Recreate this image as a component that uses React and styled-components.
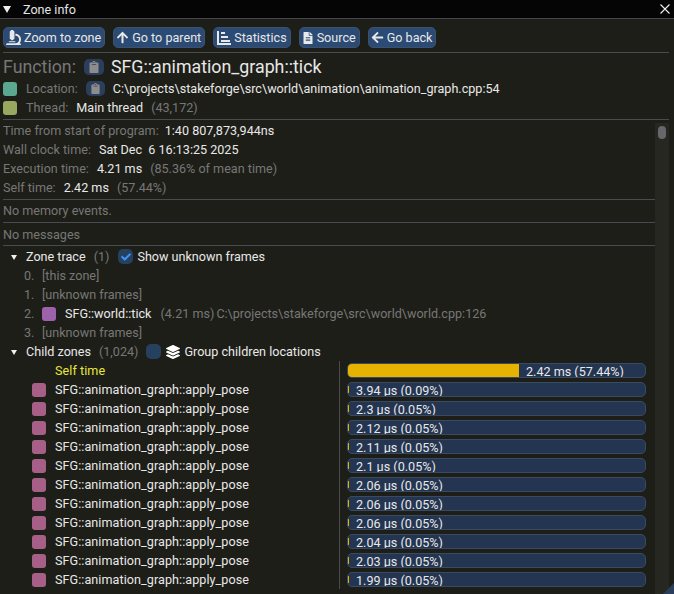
import React from 'react'
import styled, { createGlobalStyle } from 'styled-components'
import { FaFileAlt, FaArrowUp, FaArrowLeft, FaClipboard, FaLayerGroup, FaCheck, FaMicroscope } from 'react-icons/fa'

const Global = createGlobalStyle`
  html, body { margin: 0; padding: 0; background: #1e1e18; }
  body { font-family: Roboto, "Liberation Sans", sans-serif; font-size: 12.6px; color: #fff; }
`

const Window = styled.div`
  position: relative;
  width: 674px;
  height: 594px;
  overflow: hidden;
  background: #1e1e18;
  display: flex;
  flex-direction: column;
`

const TitleBar = styled.div`
  height: 18px;
  flex: none;
  display: flex;
  align-items: center;
  justify-content: space-between;
  padding: 0 2px 0 3px;
  background: #050505;
  border-bottom: 1px solid #45454f;
  color: #e4e4e4;
`

const TitleLeft = styled.div`
  display: flex;
  align-items: center;
  gap: 12px;
`

const Body = styled.div`
  flex: 1;
  min-height: 0;
  padding: 8px 5px 0 3px;
  display: flex;
  flex-direction: column;
`

const Toolbar = styled.div`
  display: flex;
  gap: 8px;
  height: 21px;
`

const Button = styled.div`
  display: flex;
  align-items: center;
  gap: 3px;
  height: 21px;
  box-sizing: border-box;
  padding: 0 3px 0 2px;
  background: #2b4b75;
  border: 1px solid #3a5170;
  border-radius: 5px;
  color: #e8e8e8;
  white-space: nowrap;
`

const Sep = styled.div`
  height: 1px;
  flex: none;
  background: #494950;
  margin: ${p => p.$m || '5px 0 5px'};
`

const FunctionRow = styled.div`
  display: flex;
  align-items: center;
  height: 21px;
  font-size: 17.8px;
  white-space: nowrap;
`

const Row = styled.div`
  display: flex;
  align-items: center;
  height: 19px;
  flex: none;
  white-space: nowrap;
  margin-top: ${p => p.$top || 0}px;
`

const Dim = styled.span`
  color: #777;
  margin-right: ${p => p.$gap ?? 8}px;
  white-space: pre;
`

const Bright = styled.span`
  color: ${p => p.$color || '#e8e8e8'};
  margin-right: ${p => p.$gap ?? 8}px;
  white-space: pre;
`

const Swatch = styled.span`
  display: inline-block;
  flex: none;
  width: 14px;
  height: 14px;
  border-radius: 3px;
  background: ${p => p.$color};
  margin-right: ${p => p.$gap ?? 9}px;
`

const CopyBtn = styled.span`
  display: inline-flex;
  align-items: center;
  justify-content: center;
  flex: none;
  width: ${p => p.$w}px;
  height: ${p => p.$h}px;
  border-radius: 5px;
  background: #2b3f5c;
  color: #8d8d8d;
  margin-right: ${p => p.$gap}px;
`

const Lower = styled.div`
  flex: 1;
  min-height: 0;
  display: flex;
`

const Scrolled = styled.div`
  flex: 1;
  min-width: 0;
  margin-top: 1px;
  overflow: hidden;
`

const ScrollTrack = styled.div`
  width: 14px;
  flex: none;
  margin-top: 3px;
  background: #272722;
  display: flex;
  justify-content: center;
  padding-top: 3px;
`

const ScrollThumb = styled.div`
  width: 8px;
  height: 13px;
  border-radius: 4px;
  background: #66666b;
`

const Arrow = styled.span`
  width: 0;
  height: 0;
  flex: none;
  border-left: ${p => p.$size ?? 3.5}px solid transparent;
  border-right: ${p => p.$size ?? 3.5}px solid transparent;
  border-top: ${p => (p.$size ?? 3.5) * 1.6}px solid #f0f0f0;
  margin: 1px ${p => p.$gap ?? 9}px 0 ${p => p.$left ?? 8}px;
`

const Check = styled.span`
  display: inline-flex;
  align-items: center;
  justify-content: center;
  flex: none;
  width: 15px;
  height: 15px;
  border-radius: 5px;
  background: #26405f;
  color: #4296fa;
  margin-right: ${p => p.$gap ?? 4}px;
`

const Trace = styled.div`
  display: flex;
  align-items: center;
  height: 19px;
  white-space: nowrap;
  padding-left: 21px;
`

const Index = styled.span`
  width: 18px;
  flex: none;
  color: #777;
`

const Children = styled.div`
  display: grid;
  grid-template-columns: 336px 1fr;
`

const NameCol = styled.div`
  display: flex;
  flex-direction: column;
`

const ZoneName = styled.div`
  display: flex;
  align-items: center;
  height: 19px;
  padding-left: 29px;
  white-space: nowrap;
  letter-spacing: 0.06px;
  color: ${p => p.$color || '#e8e8e8'};
`

const ZoneSwatch = styled.span`
  width: 14px;
  height: 14px;
  flex: none;
  border-radius: 3px;
  background: ${p => p.$color || 'transparent'};
  margin-right: 9px;
`

const BarCol = styled.div`
  border-left: 1px solid #494950;
  padding-left: 7px;
  display: flex;
  flex-direction: column;
  gap: 4px;
  margin-right: 9px;
  padding-top: 2px;
`

const Bar = styled.div`
  position: relative;
  height: 15px;
  box-sizing: border-box;
  border: 1px solid #3a4a60;
  border-radius: 5px;
  background: #233550;
  overflow: hidden;
  display: flex;
  align-items: center;
  color: #e8e8e8;
  padding: 2px 0 0 ${p => p.$offset}px;
  white-space: nowrap;
`

const Fill = styled.div`
  position: absolute;
  left: 0;
  top: 0;
  bottom: 0;
  background: #e6b400;
`

const Grip = styled.div`
  position: absolute;
  right: 0;
  bottom: 0;
  width: 0;
  height: 0;
  border-left: 11px solid transparent;
  border-bottom: 11px solid #2b3f5c;
`

const ChartIcon = () => (
  <svg width="15" height="14" viewBox="0 0 15 14" fill="#e8e8e8">
    <rect x="1" y="0" width="2" height="14" />
    <rect x="1" y="12" width="14" height="2" />
    <rect x="5" y="1" width="4" height="2" />
    <rect x="5" y="5" width="7" height="2" />
    <rect x="5" y="9" width="9" height="2" />
  </svg>
)

const CloseIcon = () => (
  <svg width="10" height="10" viewBox="0 0 10 10" stroke="#f0f0f0" strokeWidth="1.1" fill="none" style={{ marginRight: 2 }}>
    <path d="M0.5 0.5L9.5 9.5M9.5 0.5L0.5 9.5" />
  </svg>
)

const rows = ['3.94 µs (0.09%)', '2.3 µs (0.05%)', '2.12 µs (0.05%)', '2.11 µs (0.05%)', '2.1 µs (0.05%)', '2.06 µs (0.05%)', '2.06 µs (0.05%)', '2.06 µs (0.05%)', '2.04 µs (0.05%)', '2.03 µs (0.05%)', '1.99 µs (0.05%)']

export default function App() {
  return (
    <Window>
      <Global />
      <TitleBar>
        <TitleLeft>
          <Arrow $size={4.5} $left={0} $gap={0} />
          <span>Zone info</span>
        </TitleLeft>
        <CloseIcon />
      </TitleBar>
      <Body>
        <Toolbar>
          <Button><FaMicroscope size={15} />Zoom to zone</Button>
          <Button><FaArrowUp size={13} />Go to parent</Button>
          <Button><ChartIcon />Statistics</Button>
          <Button><FaFileAlt size={12} />Source</Button>
          <Button><FaArrowLeft size={13} />Go back</Button>
        </Toolbar>
        <Sep $m="4px 0 3px" />
        <FunctionRow>
          <Dim $gap={8}>Function:</Dim>
          <CopyBtn $w={20} $h={16} $gap={7}><FaClipboard size={12} /></CopyBtn>
          <Bright $gap={0}>SFG::animation_graph::tick</Bright>
        </FunctionRow>
        <Row $top={2}>
          <Swatch $color="#5aa88f" />
          <Dim $gap={8}>Location:</Dim>
          <CopyBtn $w={19} $h={15} $gap={8}><FaClipboard size={11} /></CopyBtn>
          <Bright>C:\projects\stakeforge\src\world\animation\animation_graph.cpp:54</Bright>
        </Row>
        <Row>
          <Swatch $color="#98a85f" />
          <Dim>Thread:</Dim>
          <Bright>Main thread</Bright>
          <Dim>(43,172)</Dim>
        </Row>
        <Sep $m="2px 0 0" />
        <Lower>
          <Scrolled>
            <Row><Dim $gap={6}>Time from start of program:</Dim><Bright>1:40 807,873,944ns</Bright></Row>
            <Row><Dim>Wall clock time:</Dim><Bright>Sat Dec  6 16:13:25 2025</Bright></Row>
            <Row><Dim>Execution time:</Dim><Bright>4.21 ms</Bright><Dim>(85.36% of mean time)</Dim></Row>
            <Row><Dim>Self time:</Dim><Bright>2.42 ms</Bright><Dim>(57.44%)</Dim></Row>
            <Sep $m="2px 0 1px" />
            <Row><Dim>No memory events.</Dim></Row>
            <Sep $m="2px 0 2px" />
            <Row><Dim>No messages</Dim></Row>
            <Sep $m="1px 0 1px" />
            <Row>
              <Arrow />
              <Bright>Zone trace</Bright>
              <Dim $gap={9}>(1)</Dim>
              <Check><FaCheck size={10} /></Check>
              <Bright>Show unknown frames</Bright>
            </Row>
            <Trace><Index>0.</Index><Dim>[this zone]</Dim></Trace>
            <Trace><Index>1.</Index><Dim>[unknown frames]</Dim></Trace>
            <Trace>
              <Index>2.</Index>
              <ZoneSwatch $color="#9d62aa" />
              <Bright $gap={9}>SFG::world::tick</Bright>
              <Dim $gap={2}>(4.21 ms)</Dim>
              <Dim>C:\projects\stakeforge\src\world\world.cpp:126</Dim>
            </Trace>
            <Trace><Index>3.</Index><Dim>[unknown frames]</Dim></Trace>
            <Row>
              <Arrow />
              <Bright>Child zones</Bright>
              <Dim>(1,024)</Dim>
              <Check $gap={5} />
              <FaLayerGroup size={14} style={{ marginRight: 4, flex: 'none' }} />
              <Bright>Group children locations</Bright>
            </Row>
            <Children>
              <NameCol>
                <ZoneName $color="#e6e63c"><ZoneSwatch />Self time</ZoneName>
                {rows.map((r, i) => (
                  <ZoneName key={i}><ZoneSwatch $color="#a85f87" />SFG::animation_graph::apply_pose</ZoneName>
                ))}
              </NameCol>
              <BarCol>
                <Bar $offset={178}>
                  <Fill style={{ width: '57.44%' }} />
                  <span style={{ position: 'relative' }}>2.42 ms (57.44%)</span>
                </Bar>
                {rows.map((r, i) => (
                  <Bar key={i} $offset={8}>
                    <Fill style={{ width: 1, top: 3, bottom: 3 }} />
                    <span>{r}</span>
                  </Bar>
                ))}
              </BarCol>
            </Children>
          </Scrolled>
          <ScrollTrack><ScrollThumb /></ScrollTrack>
        </Lower>
      </Body>
      <Grip />
    </Window>
  )
}
